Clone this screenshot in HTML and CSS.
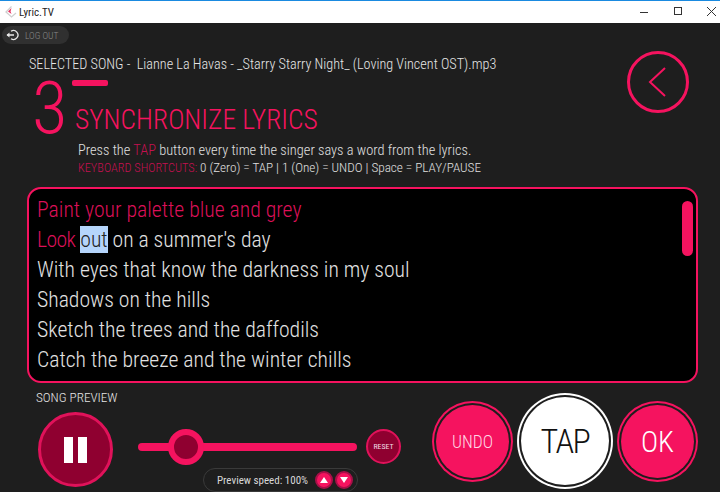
FILE: index.html
```html
<!DOCTYPE html>
<html lang="en">
<head>
<meta charset="utf-8">
<title>Lyric.TV</title>
<link rel="stylesheet" href="styles.css">
</head>
<body>
<div class="app">
  <header class="titlebar">
    <div class="brand">
      <svg class="logo" width="12" height="12" viewBox="0 0 12 12"><path d="M6.500 0.500L1 6L6.500 11L11 7" fill="none" stroke="#cfcfcf" stroke-width="1.300"/><path d="M6.500 2L3 5.500L6.500 8L5.500 5.500Z" fill="#e8305f"/></svg>
      <span>Lyric.TV</span>
    </div>
    <div class="winctl">
      <svg width="12" height="12" viewBox="0 0 12 12"><path d="M0 6.500H8" stroke="#333" fill="none"/></svg>
      <svg width="12" height="12" viewBox="0 0 12 12"><rect x="1.500" y="1.500" width="7" height="7" stroke="#333" fill="none"/></svg>
      <svg width="12" height="12" viewBox="0 0 12 12"><path d="M1 1L10 10M10 1L1 10" stroke="#333" fill="none"/></svg>
    </div>
  </header>
  <main class="main">
    <div class="topbar">
      <button class="logout">
        <svg width="14" height="12" viewBox="0 0 14 12"><path d="M5 2.200A4.500 4.500 0 1 1 5 9.800" fill="none" stroke="#e8e8e8" stroke-width="1.300"/><path d="M1 6H8" stroke="#e8e8e8" stroke-width="1.500"/><path d="M0.500 6L3.500 3.500V8.500Z" fill="#e8e8e8"/></svg>
        <span>LOG OUT</span>
      </button>
    </div>
    <section class="head">
      <div class="head-text">
        <p class="selected">SELECTED SONG - &nbsp;Lianne La Havas - _Starry Starry Night_ (Loving Vincent OST).mp3</p>
        <div class="step">
          <span class="num">3</span>
          <div class="step-side">
            <span class="dash"></span>
            <h1>SYNCHRONIZE LYRICS</h1>
          </div>
        </div>
        <div class="instr">
          <p>Press the <span class="dim">TAP</span> button every time the singer says a word from the lyrics.</p>
          <p class="keys"><span class="dim">KEYBOARD SHORTCUTS:</span> 0 (Zero) = TAP | 1 (One) = UNDO | Space = PLAY/PAUSE</p>
        </div>
      </div>
      <button class="back" aria-label="Back">
        <svg width="56" height="56" viewBox="0 0 56 56"><path d="M35 14L20 28L35 42" fill="none" stroke="#f5135f" stroke-width="2"/></svg>
      </button>
    </section>
    <section class="lyrics">
      <p><span class="done">Paint your palette blue and grey</span></p>
      <p><span class="done tight">Look</span> <span class="sel">out</span> on a summer's day</p>
      <p>With eyes that know the darkness in my soul</p>
      <p>Shadows on the hills</p>
      <p>Sketch the trees and the daffodils</p>
      <p>Catch the breeze and the winter chills</p>
      <span class="scroll"></span>
    </section>
    <section class="controls">
      <div class="preview">
        <h2>SONG PREVIEW</h2>
        <div class="preview-row">
          <button class="pause" aria-label="Pause"><i></i><i></i></button>
          <div class="player">
            <div class="slider-row">
              <div class="slider"><span class="thumb"></span></div>
              <button class="reset">RESET</button>
            </div>
            <div class="speed">
              <span>Preview speed: 100%</span>
              <button class="mini" aria-label="Faster"><svg width="8" height="6" viewBox="0 0 8 6"><path d="M4 0L8 6H0Z" fill="#fff"/></svg></button>
              <button class="mini" aria-label="Slower"><svg width="8" height="6" viewBox="0 0 8 6"><path d="M4 6L8 0H0Z" fill="#fff"/></svg></button>
            </div>
          </div>
        </div>
      </div>
      <div class="actions">
        <button class="round undo">UNDO</button>
        <button class="round tap">TAP</button>
        <button class="round ok">OK</button>
      </div>
    </section>
  </main>
</div>
</body>
</html>
```
FILE: styles.css
```css
* { box-sizing: border-box; }
html, body { margin: 0; height: 100%; overflow: hidden; }
body { font-family: "Roboto", "Liberation Sans", sans-serif; font-stretch: 75%; font-weight: 300; background: #1e1e1e; }
p, h1, h2 { margin: 0; font-weight: 300; }
button { font-family: inherit; font-stretch: inherit; font-weight: 300; padding: 0; border: 0; cursor: pointer; }
.app { width: 720px; height: 492px; display: flex; flex-direction: column; overflow: hidden; }

.titlebar { height: 23px; flex: none; background: #fff; border-top: 1px solid #1a8ae0; display: flex; justify-content: space-between; align-items: center; }
.brand { display: flex; align-items: center; gap: 2px; padding-left: 5px; font-size: 11px; font-weight: 400; color: #222; }
.logo { display: block; }
.winctl { display: flex; gap: 21px; padding-right: 2px; }
.winctl svg { display: block; }

.main { flex: 1; background: #1e1e1e; color: #dcdcdc; position: relative; min-height: 0; }
.topbar { padding: 3px 0 0 2px; height: 27px; }
.logout { width: 67px; height: 18px; border-radius: 9px; background: #303030; display: flex; align-items: center; gap: 5px; padding-left: 4px; color: #8a8a8a; font-size: 9.500px; white-space: nowrap; }

.head { display: flex; justify-content: space-between; padding: 0 31px 0 29px; height: 137px; }
.selected { font-size: 14.200px; line-height: 20px; color: #e6e6e6; padding-top: 4px; height: 24px; white-space: nowrap; }
.step { display: flex; margin: 4px 0 0 3px; height: 56px; }
.num { font-size: 73px; line-height: 60px; color: #f5135f; width: 40px; }
.step-side { display: flex; flex-direction: column; padding-top: 2px; }
.dash { width: 36px; height: 9px; border-radius: 2px; background: #f5135f; margin-bottom: 20px; }
h1 { font-size: 27.500px; line-height: 28px; color: #f5135f; white-space: nowrap; margin-left: 3px; }
.instr { padding: 8px 0 0 49px; font-size: 14.400px; line-height: 17px; color: #e0e0e0; white-space: nowrap; }
.dim { color: #c41050; }
.keys { font-size: 13.200px; }
.keys .dim { font-size: 12.300px; }

.back { width: 62px; height: 62px; margin-top: 1px; border-radius: 50%; border: 3px solid #f5135f; background: transparent; display: flex; align-items: center; justify-content: center; }

.lyrics { position: relative; width: 671px; height: 196px; margin-left: 27px; border: 2px solid #f5135f; border-radius: 14px; background: #000; padding: 6px 8px; font-size: 21.700px; line-height: 30px; color: #e2e2e2; }
.lyrics p { white-space: nowrap; }
.done { color: #dc1058; }
.tight { letter-spacing: -0.600px; }
.sel { background: #b5d5fb; color: #222; padding: 1px 0; }
.scroll { position: absolute; top: 12px; right: 3px; width: 11px; height: 55px; border-radius: 6px; background: #f5135f; }

.controls { display: flex; justify-content: space-between; padding: 7px 26px 0 36px; }
.preview { width: 365px; }
h2 { font-size: 13.200px; line-height: 16px; color: #e6e6e6; }
.preview-row { display: flex; margin: 6px 0 0 2px; }
.pause { width: 75px; height: 75px; flex: none; border-radius: 50%; background: #8f0030; border: 3px solid #e0125a; display: flex; align-items: center; justify-content: center; gap: 5px; }
.pause i { width: 9px; height: 26px; background: #fff; }
.player { margin-left: 25px; flex: 1; display: flex; flex-direction: column; }
.slider-row { display: flex; align-items: center; margin-top: 17px; height: 36px; }
.slider { position: relative; width: 219px; height: 8px; border-radius: 4px; background: #f5135f; }
.thumb { position: absolute; left: 30px; top: -14px; width: 36px; height: 36px; border-radius: 50%; background: #8f0030; border: 6px solid #f5135f; }
.reset { width: 35px; height: 35px; margin: 0 0 2px 9px; border-radius: 50%; background: #8f0030; border: 2px solid #e0125a; color: #f0dbe3; font-size: 7.800px; font-weight: 400; }
.speed { width: 155px; height: 24px; margin: 3px 0 0 65px; border: 1px solid #3a3a3a; border-radius: 12px; display: flex; align-items: center; padding-left: 13px; font-size: 11px; font-weight: 400; color: #d8d8d8; gap: 2px; white-space: nowrap; }
.speed span { margin-right: 5px; }
.mini { width: 18px; height: 18px; border-radius: 50%; background: #f5135f; border: 2px solid #a80f48; display: flex; align-items: center; justify-content: center; }
.mini svg { display: block; }

.actions { display: flex; align-items: flex-start; gap: 12px; }
.round { border-radius: 50%; background: #f5135f; color: #fff; }
.undo, .ok { width: 73px; height: 73px; margin-top: 15px; background: #f5135f; box-shadow: 0 0 0 2px #1e1e1e, 0 0 0 4px #f5135f; }
.undo { font-size: 17.500px; color: #ffd6e4; }
.ok { font-size: 29px; color: #fff; }
.tap { width: 88px; height: 88px; margin-top: 7px; background: #fff; color: #111; font-size: 34px; letter-spacing: -1.500px; box-shadow: 0 0 0 2px #1e1e1e, 0 0 0 4px #fff; }
```
